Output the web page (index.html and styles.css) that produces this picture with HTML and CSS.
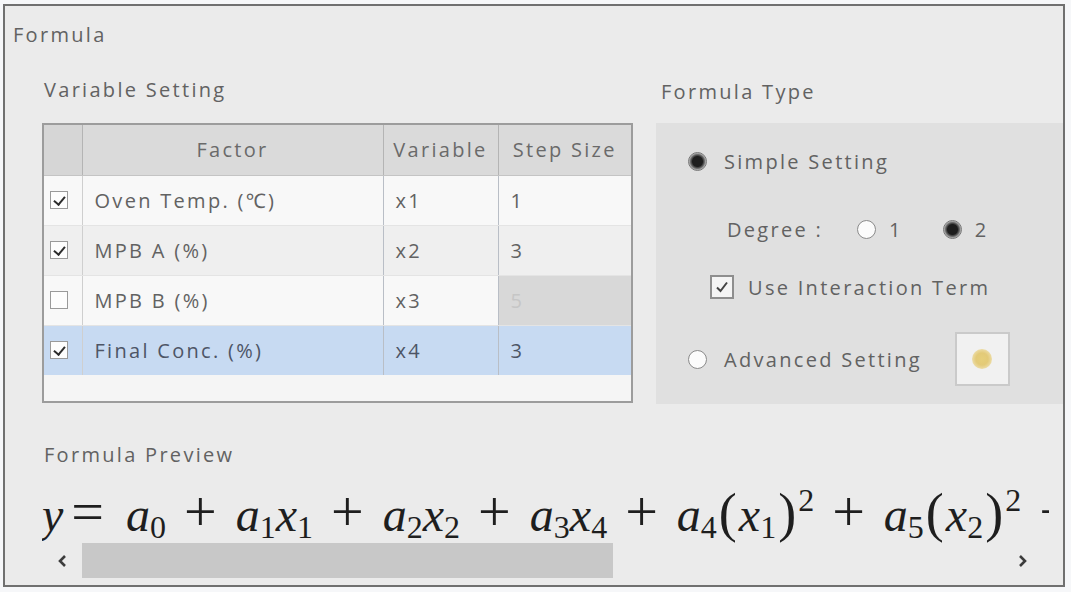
FILE: index.html
```html
<!DOCTYPE html>
<html lang="en">
  <head>
    <meta charset="UTF-8" />
    <meta name="viewport" content="width=device-width, initial-scale=1.0" />
    <title>Formula</title>
    <link rel="stylesheet" href="styles.css">
  </head>
  <body>
    <div class="frame">
      <div class="legend">Formula</div>

      <div class="top">
        <!-- Variable Setting -->
        <section class="var-setting">
          <div class="label">Variable Setting</div>
          <div class="table-box">
            <table class="var-table">
              <colgroup>
                <col class="c-check" />
                <col class="c-factor" />
                <col class="c-var" />
                <col class="c-step" />
              </colgroup>
              <thead>
                <tr>
                  <th></th>
                  <th>Factor</th>
                  <th>Variable</th>
                  <th>Step Size</th>
                </tr>
              </thead>
              <tbody>
                <tr>
                  <td class="chk"><span class="cb on"></span></td>
                  <td>Oven Temp. (℃)</td>
                  <td>x1</td>
                  <td>1</td>
                </tr>
                <tr class="alt">
                  <td class="chk"><span class="cb on"></span></td>
                  <td>MPB A (%)</td>
                  <td>x2</td>
                  <td>3</td>
                </tr>
                <tr>
                  <td class="chk"><span class="cb"></span></td>
                  <td>MPB B (%)</td>
                  <td>x3</td>
                  <td class="disabled">5</td>
                </tr>
                <tr class="selected">
                  <td class="chk"><span class="cb on"></span></td>
                  <td>Final Conc. (%)</td>
                  <td>x4</td>
                  <td>3</td>
                </tr>
              </tbody>
            </table>
            <div class="filler"></div>
          </div>
        </section>

        <!-- Formula Type -->
        <section class="formula-type">
          <div class="label label-type">Formula Type</div>
          <div class="type-panel">
            <div class="opt opt-simple">
              <span class="radio on"></span>
              <span>Simple Setting</span>
            </div>
            <div class="opt opt-degree">
              <span class="deg-label">Degree :</span>
              <span class="radio"></span>
              <span class="deg-num">1</span>
              <span class="radio on"></span>
              <span class="deg-num">2</span>
            </div>
            <div class="opt opt-inter">
              <span class="box-check">
                <svg width="16" height="16" viewBox="0 0 16 16"><path d="M3 8.5 L6.5 12 L13 3.5" fill="none" stroke="#444" stroke-width="2"/></svg>
              </span>
              <span>Use Interaction Term</span>
            </div>
            <div class="opt opt-adv">
              <span class="radio"></span>
              <span>Advanced Setting</span>
              <button class="adv-btn" type="button"><span class="dot"></span></button>
            </div>
          </div>
        </section>
      </div>

      <!-- Formula Preview -->
      <section class="preview">
        <div class="label">Formula Preview</div>
        <div class="math-view">
          <div class="math">
            <i>y</i><span class="op eq">=</span><i>a</i><sub>0</sub><span class="op">+</span><i>a</i><sub>1</sub><i>x</i><sub>1</sub><span class="op">+</span><i>a</i><sub>2</sub><i>x</i><sub>2</sub><span class="op">+</span><i>a</i><sub>3</sub><i>x</i><sub>4</sub><span class="op">+</span><i>a</i><sub>4</sub><span class="par">(</span><i>x</i><sub>1</sub><span class="par">)</span><sup>2</sup><span class="op">+</span><i>a</i><sub>5</sub><span class="par">(</span><i>x</i><sub>2</sub><span class="par">)</span><sup>2</sup><span class="op">+</span>
          </div>
        </div>
        <div class="hscroll">
          <span class="arrow">
            <svg width="10" height="14" viewBox="0 0 10 14"><path d="M8 2 L3 7 L8 12" fill="none" stroke="#3c3c3c" stroke-width="2.6"/></svg>
          </span>
          <div class="track"><div class="thumb"></div></div>
          <span class="arrow">
            <svg width="10" height="14" viewBox="0 0 10 14"><path d="M2 2 L7 7 L2 12" fill="none" stroke="#3c3c3c" stroke-width="2.6"/></svg>
          </span>
        </div>
      </section>
    </div>
  </body>
</html>
```

FILE: styles.css
```css
* {
  box-sizing: border-box;
}
body {
  margin: 0;
  background-color: #f6f7f9;
  font-family: "Open Sans", "Noto Sans", sans-serif;
  font-size: 20px;
  letter-spacing: 2.3px;
  color: #626262;
}

/* outer group box */
.frame {
  margin: 4px 0 0 3px;
  width: 1062px;
  height: 583px;
  border: 2px solid #707070;
  background-color: #ebebeb;
  padding: 17px 0 0 0;
}
.legend {
  height: 24px;
  line-height: 24px;
  padding-left: 8px;
}
.label {
  height: 24px;
  line-height: 24px;
  padding-left: 2px;
}

.top {
  display: grid;
  grid-template-columns: 591px 1fr;
  column-gap: 23px;
  margin: 31px 0 0 37px;
}

/* Variable Setting table */
.table-box {
  margin-top: 21px;
  border: 2px solid #9c9c9c;
  background-color: #f5f5f5;
}
.var-table {
  width: 100%;
  border-collapse: collapse;
  table-layout: fixed;
}
.c-check { width: 38px; }
.c-factor { width: 301px; }
.c-var { width: 115px; }
.c-step { width: 133px; }
.var-table th {
  height: 50px;
  background-color: #dadada;
  font-weight: normal;
  color: #6a6a6a;
  border-left: 1px solid #b4b4b4;
  border-bottom: 1px solid #c4c4c4;
  padding: 0;
}
.var-table th:first-child {
  border-left: none;
  background-color: #d6d6d6;
}
.var-table td {
  height: 50px;
  padding: 0 0 0 12px;
  border-left: 1px solid #b9bec6;
  border-bottom: 1px solid #e4e4e4;
  background-color: #f8f8f8;
  white-space: nowrap;
}
.var-table td:first-child {
  border-left: none;
}
.var-table td.chk {
  padding: 0 0 0 6px;
  border-right: 1px solid #cfcfcf;
}
.var-table tr.alt td {
  background-color: #efefef;
}
.var-table td.disabled {
  background-color: #d8d8d8;
  color: #c6c6c6;
}
.var-table tr.selected td {
  background-color: #c7daf2;
  color: #4d5566;
  border-bottom: none;
}
.filler {
  height: 26px;
}

.cb {
  display: block;
  width: 18px;
  height: 18px;
  border: 1px solid #9a9a9a;
  background-color: #fdfdfd;
  position: relative;
}
.cb.on::after {
  content: "";
  position: absolute;
  left: 5px;
  top: 2px;
  width: 5px;
  height: 9px;
  border: solid #2c2c2c;
  border-width: 0 2px 2px 0;
  transform: rotate(40deg);
}

/* Formula Type panel */
.label-type {
  padding-left: 5px;
  margin-top: 2px;
}
.type-panel {
  margin-top: 19px;
  height: 281px;
  background-color: #e0e0e0;
  padding: 20px 0 0 32px;
}
.opt {
  display: flex;
  align-items: center;
  height: 36px;
}
.opt-degree {
  margin-top: 32px;
  padding-left: 39px;
}
.opt-inter {
  margin-top: 22px;
  padding-left: 22px;
}
.opt-adv {
  margin-top: 27px;
  height: 54px;
}
.radio {
  width: 19px;
  height: 19px;
  border-radius: 50%;
  border: 1px solid #8a8a8a;
  background-color: #fbfbfb;
  margin-right: 17px;
  flex: none;
}
.radio.on {
  background: radial-gradient(circle, #1e1e1e 0, #1e1e1e 5px, #6c6c6c 7px, #d8d8d8 9px);
  border-color: #777;
}
.deg-label {
  margin-right: 34px;
}
.deg-num {
  margin-right: 40px;
}
.deg-num:last-child {
  margin-right: 0;
}
.opt-degree .radio {
  margin-right: 13px;
}
.box-check {
  width: 24px;
  height: 24px;
  border: 2px solid #8e8e8e;
  background-color: #f4f4f4;
  display: flex;
  align-items: center;
  justify-content: center;
  margin-right: 14px;
}
.adv-btn {
  margin-left: 33px;
  width: 55px;
  height: 54px;
  border: 2px solid #cacaca;
  background-color: #f1f1f1;
  display: flex;
  align-items: center;
  justify-content: center;
  padding: 0;
}
.dot {
  width: 20px;
  height: 20px;
  border-radius: 50%;
  background: radial-gradient(circle, #e6cf7a 0, #e3ca78 6px, #ecdca6 10px);
}

/* Formula Preview */
.preview {
  margin: 39px 20px 0 37px;
}
.math-view {
  margin: 12px -6px 0 0;
  overflow-x: clip;
}
.math {
  white-space: nowrap;
  font-family: "Liberation Serif", "DejaVu Serif", serif;
  font-size: 48px;
  line-height: 56px;
  letter-spacing: 0;
  padding-top: 4px;
  color: #1e1e1e;
}
.math i {
  font-style: italic;
}
.math sub,
.math sup {
  font-size: 32px;
  line-height: 1;
}
.math sub {
  vertical-align: -7px;
}
.math sup {
  vertical-align: 20px;
}
.math .op {
  font-size: 58px;
  line-height: 1;
  margin: 0 19px 0 18px;
}
.math .op.eq {
  margin: 0 22px 0 8px;
}
.math .par {
  font-size: 54px;
  line-height: 1;
  margin: 0 2px;
}
.hscroll {
  display: flex;
  align-items: center;
  height: 35px;
}
.arrow {
  width: 40px;
  display: flex;
  justify-content: center;
}
.track {
  flex: 1;
  height: 35px;
}
.thumb {
  width: 531px;
  height: 35px;
  background-color: #c8c8c8;
}
```
